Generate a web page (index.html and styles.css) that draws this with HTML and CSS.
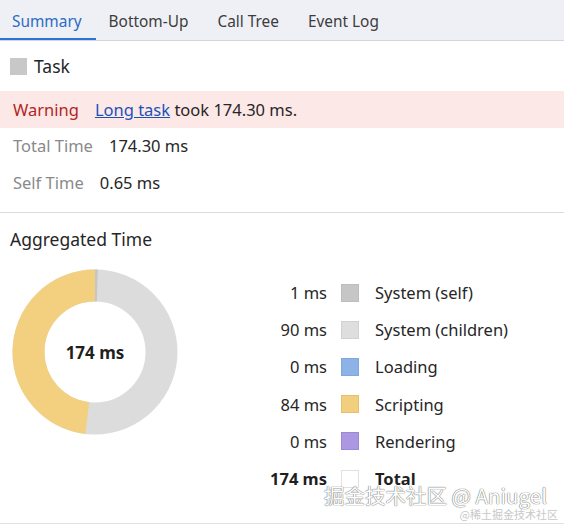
FILE: index.html
```html
<!DOCTYPE html>
<html>
<head>
<meta charset="utf-8">
<link rel="stylesheet" href="styles.css">
</head>
<body>
<div class="panel">
  <div class="tabs">
    <div class="tab active">Summary</div>
    <div class="tab">Bottom-Up</div>
    <div class="tab">Call Tree</div>
    <div class="tab">Event Log</div>
  </div>
  <div class="details">
    <div class="title-row"><span class="swatch task"></span><span class="title">Task</span></div>
    <div class="warning"><span class="warn-label">Warning</span><a class="link">Long task</a><span class="warn-text">&nbsp;took 174.30 ms.</span></div>
    <div class="row"><span class="label">Total Time</span><span class="value">174.30 ms</span></div>
    <div class="row"><span class="label">Self Time</span><span class="value">0.65 ms</span></div>
  </div>
  <div class="aggregated">
    <div class="heading">Aggregated Time</div>
    <div class="chart-area">
      <div class="donut">
        <svg width="166" height="166" viewBox="0 0 166 166">
          <circle cx="83" cy="83" r="66.5" fill="none" stroke="#dcdcdc" stroke-width="32"/>
          <circle cx="83" cy="83" r="66.5" fill="none" stroke="#f2d07f" stroke-width="32"
            stroke-dasharray="201.4 417.8" stroke-dashoffset="-216.4" transform="rotate(-90 83 83)"/>
          <circle cx="83" cy="83" r="66.5" fill="none" stroke="#c6c6c6" stroke-width="32"
            stroke-dasharray="2.4 417.8" stroke-dashoffset="0" transform="rotate(-90 83 83)"/>
        </svg>
        <div class="donut-label">174 ms</div>
      </div>
      <div class="legend">
        <div class="lrow"><span class="lval">1 ms</span><span class="swatch sys-self"></span><span class="lname">System (self)</span></div>
        <div class="lrow"><span class="lval">90 ms</span><span class="swatch sys-child"></span><span class="lname">System (children)</span></div>
        <div class="lrow"><span class="lval">0 ms</span><span class="swatch loading"></span><span class="lname">Loading</span></div>
        <div class="lrow"><span class="lval">84 ms</span><span class="swatch scripting"></span><span class="lname">Scripting</span></div>
        <div class="lrow"><span class="lval">0 ms</span><span class="swatch rendering"></span><span class="lname">Rendering</span></div>
        <div class="lrow total"><span class="lval">174 ms</span><span class="swatch total-sw"></span><span class="lname">Total</span></div>
      </div>
    </div>
  </div>
  <div class="watermark">
    <div class="wm-main">掘金技术社区 @ Aniugel</div>
    <div class="wm-sub">@稀土掘金技术社区</div>
  </div>
</div>
</body>
</html>
```
FILE: styles.css
```css
html, body {
  margin: 0;
  padding: 0;
  background: #ffffff;
}
body {
  font-family: "Noto Sans", "Open Sans", sans-serif;
  color: #202124;
  width: 564px;
  height: 526px;
  overflow: hidden;
}
.panel {
  position: relative;
  width: 564px;
  height: 523px;
  border-bottom: 1px solid #dfe1e3;
}
.tabs {
  display: flex;
  height: 41px;
  background: #eef0f5;
  border-bottom: 1px solid #d3d6dc;
  box-sizing: border-box;
}
.tab {
  box-sizing: border-box;
  height: 40px;
  padding: 5px 15px 0 12px;
  margin-right: 2px;
  font-size: 15.4px;
  line-height: 33px;
  color: #3c3c3c;
  border-bottom: 2px solid transparent;
}
.tab.active {
  color: #2a6bc2;
  border-bottom-color: #2a73d9;
  padding-right: 14px;
  margin-right: 1px;
}
.details {
  border-bottom: 1px solid #dadce0;
  padding-bottom: 10px;
}
.title-row {
  display: flex;
  align-items: center;
  height: 50px;
  padding-left: 10px;
  gap: 7px;
}
.title {
  font-size: 17.5px;
  color: #262626;
}
.swatch {
  display: inline-block;
  width: 17px;
  height: 17px;
  box-sizing: border-box;
  flex: none;
}
.task { background: #c8c8c8; }
.warning {
  display: flex;
  align-items: center;
  height: 37px;
  background: #fde8e8;
  padding-left: 13px;
  font-size: 16.5px;
}
.warn-label {
  color: #b3261e;
  margin-right: 16px;
}
.link {
  color: #1a52b8;
  text-decoration: underline;
}
.warn-text { color: #262626; }
.row {
  display: flex;
  align-items: center;
  height: 37px;
  padding-left: 13px;
  font-size: 16.5px;
  padding-bottom: 2px;
  box-sizing: border-box;
}
.label {
  color: #8a8a8a;
  margin-right: 16px;
}
.value { color: #262626; }
.aggregated {
  padding: 14px 0 0 10px;
}
.heading {
  font-size: 17.5px;
  color: #262626;
  line-height: 24px;
}
.chart-area {
  display: flex;
  margin-top: 18px;
}
.donut {
  position: relative;
  width: 166px;
  height: 166px;
  margin-left: 2px;
}
.donut svg { display: block; }
.donut-label {
  position: absolute;
  inset: 0;
  display: flex;
  align-items: center;
  justify-content: center;
  font-weight: bold;
  font-size: 17px;
  color: #1f1f1f;
}
.legend {
  display: flex;
  flex-direction: column;
  margin-left: 62px;
  margin-top: 5px;
}
.lrow {
  display: flex;
  align-items: center;
  height: 37.2px;
  font-size: 16.5px;
}
.lval {
  width: 87px;
  text-align: right;
  color: #262626;
  margin-right: 14px;
}
.lname {
  margin-left: 16px;
  color: #262626;
}
.sys-self { background: #c6c6c6; border: 1px solid #bdbdbd; width: 18px; height: 18px; }
.sys-child { background: #dedede; border: 1px solid #d2d2d2; width: 18px; height: 18px; }
.loading { background: #8db3e6; border: 1px solid #80a8de; width: 18px; height: 18px; }
.scripting { background: #f2cf7e; border: 1px solid #e6c06c; width: 18px; height: 18px; }
.rendering { background: #ab97e2; border: 1px solid #9d88d8; width: 18px; height: 18px; }
.total-sw { background: #ffffff; border: 1px solid #e2e2e2; width: 18px; height: 18px; }
.total .lval, .total .lname { font-weight: bold; color: #1f1f1f; }
.watermark {
  position: absolute;
  right: 6px;
  bottom: 2px;
  display: flex;
  flex-direction: column;
  align-items: flex-end;
}
.wm-main {
  font-family: "Noto Sans CJK SC", "Noto Sans", sans-serif;
  font-size: 20.5px;
  line-height: 26px;
  color: #ffffff;
  text-shadow: 0 0 1px #666, 0 0 1px #666;
  margin-right: 11px;
}
.wm-sub {
  font-family: "Noto Sans CJK SC", sans-serif;
  font-size: 11px;
  line-height: 13px;
  color: #c8c8c8;
}
```
